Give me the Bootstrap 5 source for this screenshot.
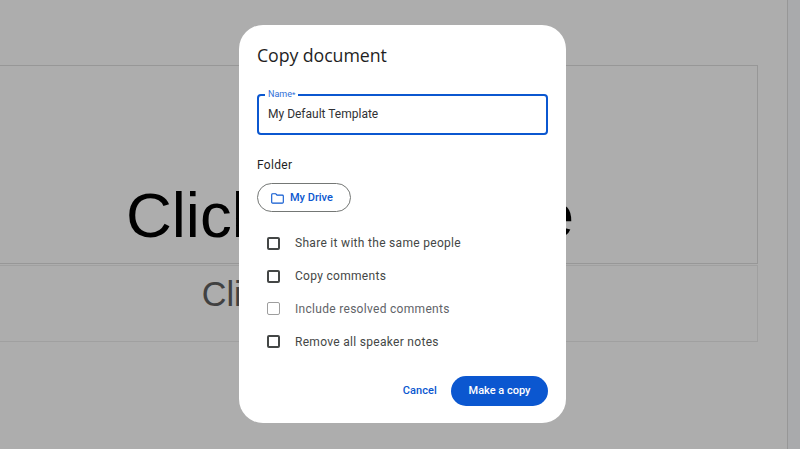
<!DOCTYPE html>
<html lang="en">
<head>
  <meta charset="UTF-8" />
  <title>Copy document</title>
  <link href="https://cdn.jsdelivr.net/npm/bootstrap@5.3.0/dist/css/bootstrap.min.css" rel="stylesheet" />
  <style>
    html, body { height: 449px; overflow: hidden; }
    body { background: #a9aaac; font-family: "Liberation Sans", Arial, sans-serif; }

    /* slide behind the dialog */
    .slide-area { width: 788px; height: 449px; background: #adadad; border-right: 1px solid #979797; padding-top: 65px; overflow: hidden; }
    .ph-box { width: 816px; margin-left: -58px; border: 1px solid #979797; color: #000; text-align: center; }
    .ph-title { height: 199px; font-size: 63.5px; line-height: 72px; padding-top: 113px; margin-bottom: 1px; }
    .ph-sub { height: 77px; font-size: 34.2px; line-height: 40px; padding-top: 8px; color: #414141; border-color: #a0a0a0; }

    /* dialog */
    .dlg-layer { position: absolute; inset: 0; }
    .dlg { width: 327px; height: 398px; margin: 25px 0 0 239px; padding: 18px 18px 17px; background: #fff; border-radius: 24px; font-family: Roboto, sans-serif; color: #1f1f1f; }
    .dlg > * { flex: none; }
    .dlg-title { font-family: "Open Sans", sans-serif; font-size: 17.8px; line-height: 24px; letter-spacing: -.1px; margin: 0 0 27px; color: #1f1f1f; }
    .name-field { position: relative; }
    .name-field .form-control { height: 41px; padding: 0 9px 1px; border: 2px solid #0b57d0; border-radius: 4px; font-size: 12px; color: #303134; box-shadow: none; }
    .name-label { position: absolute; top: -5px; left: 8px; padding: 0 3px; background: #fff; font-size: 9px; line-height: 11px; color: #2f6fd8; }
    .name-label sup { top: 0; font-size: 8px; vertical-align: baseline; }
    .folder-label { font-size: 12px; line-height: 16px; letter-spacing: .3px; margin: 22px 0 10px; }
    .drive-btn { width: 94px; height: 29px; padding: 1px 0 0 13px; gap: 6px; border: 1px solid #747775; border-radius: 15px; color: #0b57d0; font-size: 11px; font-weight: 500; }
    .opt-list { margin: 15px 0 0 10px; }
    .opt-row { height: 32.8px; margin: 0; padding: 0; gap: 15px; font-size: 12px; letter-spacing: .3px; color: #444746; }
    .opt-row .form-check-input { width: 13px; height: 13px; margin: 0; float: none; border: 2px solid #444746; border-radius: 2px; flex: none; }
    .opt-row.is-off { color: #5f6368; }
    .opt-row.is-off .form-check-input { border: 1px solid #9e9e9e; opacity: 1; background: #fff; }
    .dlg-foot { margin-top: 18px; gap: 14px; }
    .cancel-btn { padding: 1px 0 0; border: 0; color: #0b57d0; font-size: 11px; font-weight: 500; letter-spacing: .1px; }
    .copy-btn { width: 97px; height: 30px; padding: 1px 0 0; border: 0; border-radius: 15px; background: #0b57d0; color: #fff; font-size: 11px; font-weight: 500; }
  </style>
</head>
<body>
  <div class="slide-area">
    <div class="ph-box ph-title">Click to add title</div>
    <div class="ph-box ph-sub">Click to add subtitle</div>
  </div>

  <div class="dlg-layer">
    <div class="dlg d-flex flex-column">
      <h5 class="dlg-title">Copy document</h5>

      <div class="name-field">
        <label class="name-label" for="docName">Name<sup>*</sup></label>
        <input id="docName" type="text" class="form-control" value="My Default Template" />
      </div>

      <div class="folder-label">Folder</div>
      <button type="button" class="btn drive-btn d-flex align-items-center">
        <svg width="13" height="11" viewBox="0 0 13 11" fill="none" stroke="#0b57d0" stroke-width="1.1"><path d="M1.6.8h3.2l1.2 1.300h5.400c.5 0 .9.4.9.9v6.200c0 .5-.4.9-.9.9H1.600c-.5 0-.9-.4-.9-.9V1.700c0-.5.4-.9.9-.9z"/></svg>
        <span>My Drive</span>
      </button>

      <div class="opt-list">
        <label class="form-check opt-row d-flex align-items-center"><input class="form-check-input" type="checkbox" />Share it with the same people</label>
        <label class="form-check opt-row d-flex align-items-center"><input class="form-check-input" type="checkbox" />Copy comments</label>
        <label class="form-check opt-row is-off d-flex align-items-center"><input class="form-check-input" type="checkbox" disabled />Include resolved comments</label>
        <label class="form-check opt-row d-flex align-items-center"><input class="form-check-input" type="checkbox" />Remove all speaker notes</label>
      </div>

      <div class="dlg-foot d-flex justify-content-end align-items-center">
        <button type="button" class="btn cancel-btn">Cancel</button>
        <button type="button" class="btn copy-btn">Make a copy</button>
      </div>
    </div>
  </div>

  <script src="https://cdn.jsdelivr.net/npm/bootstrap@5.3.0/dist/js/bootstrap.bundle.min.js"></script>
</body>
</html>
